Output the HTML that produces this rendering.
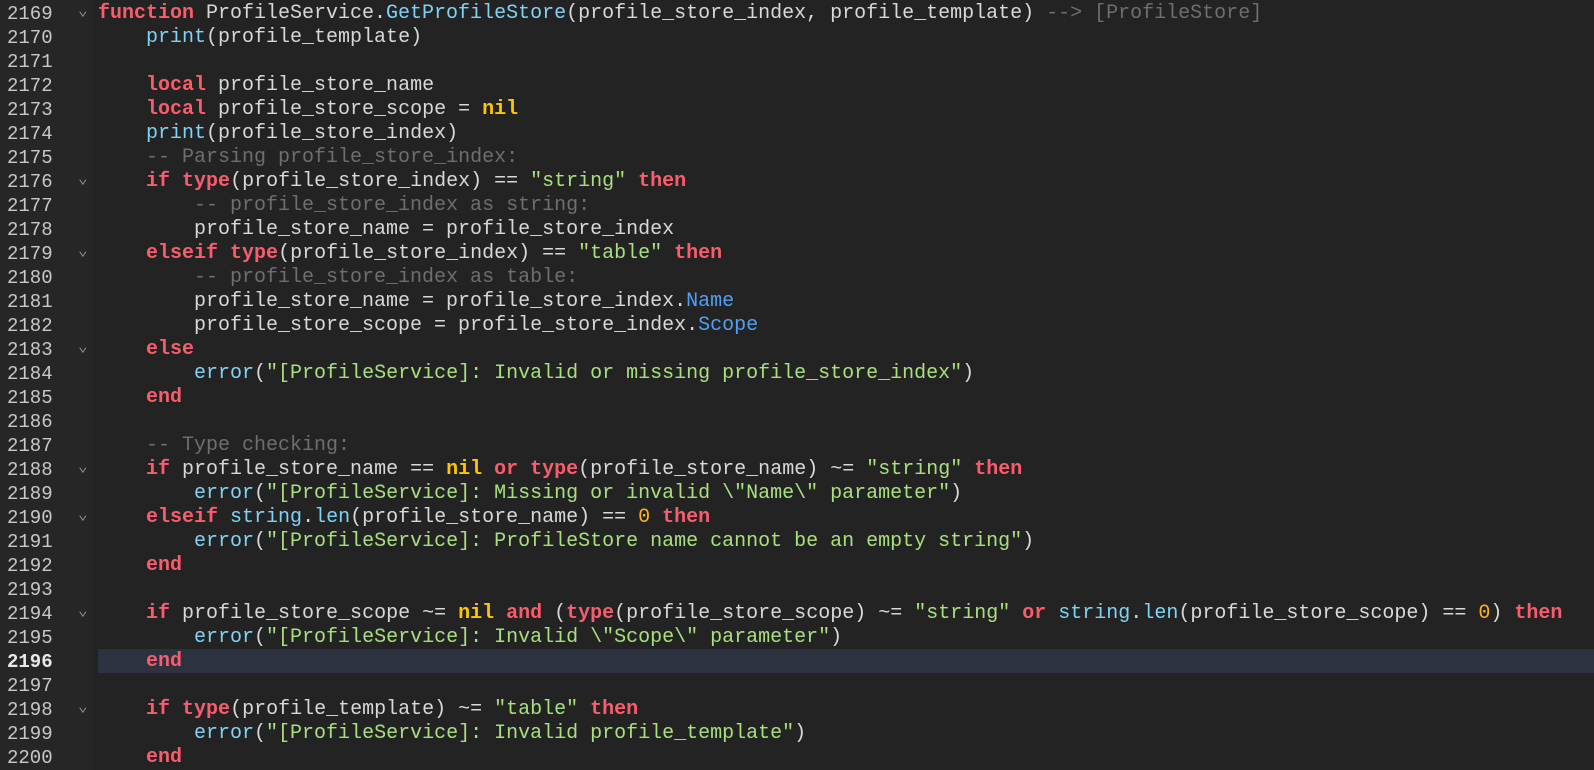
<!DOCTYPE html><html><head><meta charset="utf-8"><style>
body{margin:0;width:1594px;height:770px;background:#232323;overflow:hidden;font-family:"Liberation Mono",monospace;font-size:20px;}
#g{position:absolute;left:0;top:0;width:94px;height:770px;background:#262626;}
.l{position:absolute;left:0;height:24px;line-height:24px;white-space:pre;width:1594px}
.n{position:absolute;left:7px;top:2px;color:#c8c8c8;font-size:19px;}
.f{position:absolute;left:78px;top:-1px;color:#8a8a8a;font-size:16px;}
.c{position:absolute;left:98px;top:2px;color:#d8d8d8;}
.hl{position:absolute;left:98px;right:0;top:649px;height:24px;background:#2c3240;}
.k{color:#fa5c6c;font-weight:bold}.b{color:#7fd3f5}.s{color:#a8e07e}.y{color:#ffc600;font-weight:bold}.p{color:#4fa0f5}.m{color:#6e6e6e}.o{color:#ffb020}
</style></head><body><div id="g"></div><div class="hl"></div>
<div class="l" style="top:0px"><span class="n">2169</span><span class="f">⌄</span><span class="c"><span class="k">function</span> ProfileService.<span class="b">GetProfileStore</span>(profile_store_index, profile_template) <span class="m">--&gt; [ProfileStore]</span></span></div>
<div class="l" style="top:24px"><span class="n">2170</span><span class="c">    <span class="b">print</span>(profile_template)</span></div>
<div class="l" style="top:48px"><span class="n">2171</span></div>
<div class="l" style="top:72px"><span class="n">2172</span><span class="c">    <span class="k">local</span> profile_store_name</span></div>
<div class="l" style="top:96px"><span class="n">2173</span><span class="c">    <span class="k">local</span> profile_store_scope = <span class="y">nil</span></span></div>
<div class="l" style="top:120px"><span class="n">2174</span><span class="c">    <span class="b">print</span>(profile_store_index)</span></div>
<div class="l" style="top:144px"><span class="n">2175</span><span class="c">    <span class="m">-- Parsing profile_store_index:</span></span></div>
<div class="l" style="top:168px"><span class="n">2176</span><span class="f">⌄</span><span class="c">    <span class="k">if</span> <span class="k">type</span>(profile_store_index) == <span class="s">"string"</span> <span class="k">then</span></span></div>
<div class="l" style="top:192px"><span class="n">2177</span><span class="c">        <span class="m">-- profile_store_index as string:</span></span></div>
<div class="l" style="top:216px"><span class="n">2178</span><span class="c">        profile_store_name = profile_store_index</span></div>
<div class="l" style="top:240px"><span class="n">2179</span><span class="f">⌄</span><span class="c">    <span class="k">elseif</span> <span class="k">type</span>(profile_store_index) == <span class="s">"table"</span> <span class="k">then</span></span></div>
<div class="l" style="top:264px"><span class="n">2180</span><span class="c">        <span class="m">-- profile_store_index as table:</span></span></div>
<div class="l" style="top:288px"><span class="n">2181</span><span class="c">        profile_store_name = profile_store_index.<span class="p">Name</span></span></div>
<div class="l" style="top:312px"><span class="n">2182</span><span class="c">        profile_store_scope = profile_store_index.<span class="p">Scope</span></span></div>
<div class="l" style="top:336px"><span class="n">2183</span><span class="f">⌄</span><span class="c">    <span class="k">else</span></span></div>
<div class="l" style="top:360px"><span class="n">2184</span><span class="c">        <span class="b">error</span>(<span class="s">"[ProfileService]: Invalid or missing profile_store_index"</span>)</span></div>
<div class="l" style="top:384px"><span class="n">2185</span><span class="c">    <span class="k">end</span></span></div>
<div class="l" style="top:408px"><span class="n">2186</span></div>
<div class="l" style="top:432px"><span class="n">2187</span><span class="c">    <span class="m">-- Type checking:</span></span></div>
<div class="l" style="top:456px"><span class="n">2188</span><span class="f">⌄</span><span class="c">    <span class="k">if</span> profile_store_name == <span class="y">nil</span> <span class="k">or</span> <span class="k">type</span>(profile_store_name) ~= <span class="s">"string"</span> <span class="k">then</span></span></div>
<div class="l" style="top:480px"><span class="n">2189</span><span class="c">        <span class="b">error</span>(<span class="s">"[ProfileService]: Missing or invalid \"Name\" parameter"</span>)</span></div>
<div class="l" style="top:504px"><span class="n">2190</span><span class="f">⌄</span><span class="c">    <span class="k">elseif</span> <span class="b">string</span>.<span class="b">len</span>(profile_store_name) == <span class="o">0</span> <span class="k">then</span></span></div>
<div class="l" style="top:528px"><span class="n">2191</span><span class="c">        <span class="b">error</span>(<span class="s">"[ProfileService]: ProfileStore name cannot be an empty string"</span>)</span></div>
<div class="l" style="top:552px"><span class="n">2192</span><span class="c">    <span class="k">end</span></span></div>
<div class="l" style="top:576px"><span class="n">2193</span></div>
<div class="l" style="top:600px"><span class="n">2194</span><span class="f">⌄</span><span class="c">    <span class="k">if</span> profile_store_scope ~= <span class="y">nil</span> <span class="k">and</span> (<span class="k">type</span>(profile_store_scope) ~= <span class="s">"string"</span> <span class="k">or</span> <span class="b">string</span>.<span class="b">len</span>(profile_store_scope) == <span class="o">0</span>) <span class="k">then</span></span></div>
<div class="l" style="top:624px"><span class="n">2195</span><span class="c">        <span class="b">error</span>(<span class="s">"[ProfileService]: Invalid \"Scope\" parameter"</span>)</span></div>
<div class="l" style="top:648px"><span class="n" style="font-weight:bold;color:#e8e8e8">2196</span><span class="c">    <span class="k">end</span></span></div>
<div class="l" style="top:672px"><span class="n">2197</span></div>
<div class="l" style="top:696px"><span class="n">2198</span><span class="f">⌄</span><span class="c">    <span class="k">if</span> <span class="k">type</span>(profile_template) ~= <span class="s">"table"</span> <span class="k">then</span></span></div>
<div class="l" style="top:720px"><span class="n">2199</span><span class="c">        <span class="b">error</span>(<span class="s">"[ProfileService]: Invalid profile_template"</span>)</span></div>
<div class="l" style="top:744px"><span class="n">2200</span><span class="c">    <span class="k">end</span></span></div>
</body></html>
